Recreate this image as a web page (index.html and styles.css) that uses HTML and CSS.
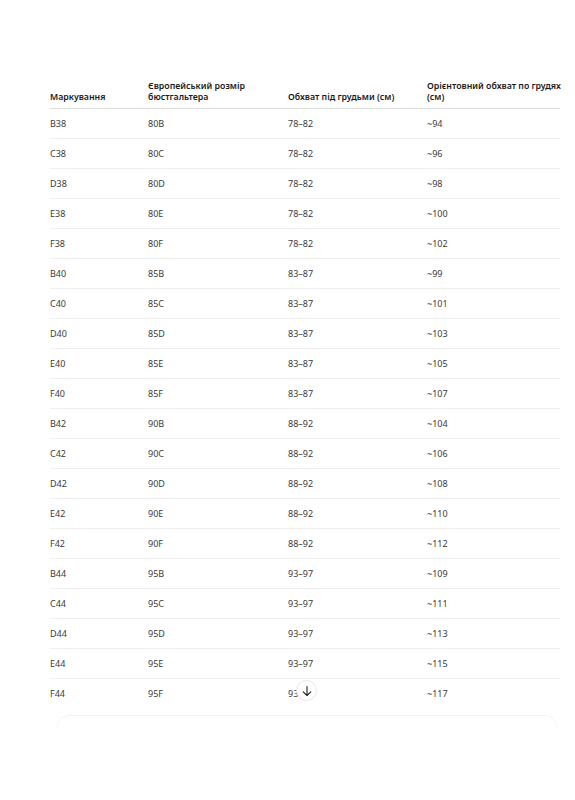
FILE: index.html
```html
<!DOCTYPE html>
<html lang="uk">
<head>
<meta charset="utf-8">
<link rel="stylesheet" href="styles.css">
</head>
<body>
<div class="page">
  <div class="table-wrap">
    <table class="sizes">
      <colgroup>
        <col class="c1"><col class="c2"><col class="c3"><col class="c4">
      </colgroup>
      <thead>
        <tr>
          <th>Маркування</th>
          <th>Європейський розмір бюстгальтера</th>
          <th>Обхват під грудьми (см)</th>
          <th class="nowrap">Орієнтовний обхват по грудях<br>(см)</th>
        </tr>
      </thead>
      <tbody>
        <tr><td>B38</td><td>80B</td><td>78–82</td><td>~94</td></tr>
        <tr><td>C38</td><td>80C</td><td>78–82</td><td>~96</td></tr>
        <tr><td>D38</td><td>80D</td><td>78–82</td><td>~98</td></tr>
        <tr><td>E38</td><td>80E</td><td>78–82</td><td>~100</td></tr>
        <tr><td>F38</td><td>80F</td><td>78–82</td><td>~102</td></tr>
        <tr><td>B40</td><td>85B</td><td>83–87</td><td>~99</td></tr>
        <tr><td>C40</td><td>85C</td><td>83–87</td><td>~101</td></tr>
        <tr><td>D40</td><td>85D</td><td>83–87</td><td>~103</td></tr>
        <tr><td>E40</td><td>85E</td><td>83–87</td><td>~105</td></tr>
        <tr><td>F40</td><td>85F</td><td>83–87</td><td>~107</td></tr>
        <tr><td>B42</td><td>90B</td><td>88–92</td><td>~104</td></tr>
        <tr><td>C42</td><td>90C</td><td>88–92</td><td>~106</td></tr>
        <tr><td>D42</td><td>90D</td><td>88–92</td><td>~108</td></tr>
        <tr><td>E42</td><td>90E</td><td>88–92</td><td>~110</td></tr>
        <tr><td>F42</td><td>90F</td><td>88–92</td><td>~112</td></tr>
        <tr><td>B44</td><td>95B</td><td>93–97</td><td>~109</td></tr>
        <tr><td>C44</td><td>95C</td><td>93–97</td><td>~111</td></tr>
        <tr><td>D44</td><td>95D</td><td>93–97</td><td>~113</td></tr>
        <tr><td>E44</td><td>95E</td><td>93–97</td><td>~115</td></tr>
        <tr><td>F44</td><td>95F</td><td>93–97</td><td>~117</td></tr>
      </tbody>
    </table>
    <button class="scroll-btn" aria-label="Прокрутити вниз">
      <svg width="12" height="12" viewBox="0 0 12 12" fill="none" stroke="#222" stroke-width="1.1" stroke-linecap="round" stroke-linejoin="round">
        <path d="M6 1.5v9M2.2 6.8L6 10.5l3.8-3.7"/>
      </svg>
    </button>
  </div>
  <div class="composer"></div>
</div>
</body>
</html>
```

FILE: styles.css
```css
html, body {
  margin: 0;
  padding: 0;
  background: #ffffff;
}

body {
  font-family: "Noto Sans", "Open Sans", sans-serif;
  color: #333333;
}

.page {
  padding: 81px 15px 0 50px;
}

.table-wrap {
  position: relative;
  width: 510px;
}

.sizes {
  width: 510px;
  border-collapse: collapse;
  table-layout: fixed;
}

.c1 { width: 98px; }
.c2 { width: 140px; }
.c3 { width: 139px; }
.c4 { width: 133px; }

.sizes th {
  text-align: left;
  vertical-align: bottom;
  font-size: 8.8px;
  font-weight: 600;
  line-height: 11px;
  color: #1a1a1a;
  padding: 0 8px 5px 0;
  border-bottom: 1px solid #dcdcdc;
}

.sizes th.nowrap {
  padding-right: 0;
  white-space: nowrap;
}

.sizes td {
  height: 29px;
  padding: 0;
  font-size: 9px;
  line-height: 11px;
  color: #3a3a3a;
  vertical-align: middle;
  border-bottom: 1px solid #efefef;
}

.sizes tbody tr:last-child td {
  border-bottom: none;
}

.scroll-btn {
  position: absolute;
  left: 246px;
  top: 599px;
  width: 21px;
  height: 21px;
  padding: 0;
  border: 1px solid #e6e6e6;
  border-radius: 50%;
  background: #ffffff;
  display: flex;
  align-items: center;
  justify-content: center;
}

.composer {
  margin: 7px 0 0 7px;
  width: 498px;
  height: 12px;
  border-top: 1px solid #f2f2f2;
  border-left: 1px solid #f7f7f7;
  border-right: 1px solid #f7f7f7;
  border-radius: 12px 12px 0 0;
}
```
